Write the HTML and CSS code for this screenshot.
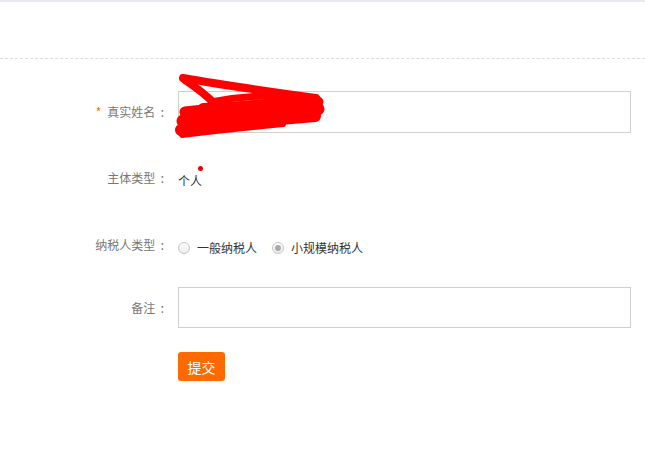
FILE: index.html
```html
<!DOCTYPE html>
<html lang="zh-CN">
<head>
<meta charset="utf-8">
<title>表单</title>
<link rel="stylesheet" href="styles.css">
</head>
<body>
<div class="topbar"></div>
<div class="header"></div>
<form class="form">
  <div class="row row-name">
    <label class="label"><span class="req">*</span>真实姓名<span class="colon">:</span></label>
    <div class="control">
      <input class="input" type="text">
      <svg class="scribble" width="160" height="70" viewBox="0 0 160 70">
        <g fill="none" stroke="#ff0000" stroke-linecap="round" stroke-linejoin="round">
          <path d="M10,6 Q55,14 143,26" stroke-width="8"/>
          <path d="M12,8 Q30,20 42,32" stroke-width="8"/>
          <path d="M38,30 Q90,20 143,26" stroke-width="7"/>
          <path d="M12,40 Q80,32 145,30" stroke-width="11"/>
          <path d="M10,49 Q80,41 145,37" stroke-width="13"/>
          <path d="M8,58 Q70,50 142,44" stroke-width="12"/>
          <path d="M30,36 L140,33" stroke-width="10"/>
          <path d="M9,63 Q50,58 110,52" stroke-width="6"/>
        </g>
      </svg>
    </div>
  </div>
  <div class="row row-type">
    <label class="label">主体类型<span class="colon">:</span></label>
    <div class="control">
      <span class="value">个人</span><span class="dot"></span>
    </div>
  </div>
  <div class="row row-tax">
    <label class="label">纳税人类型<span class="colon">:</span></label>
    <div class="control radios">
      <span class="radio-item"><span class="radio"></span>一般纳税人</span>
      <span class="radio-item"><span class="radio checked"></span>小规模纳税人</span>
    </div>
  </div>
  <div class="row row-note">
    <label class="label">备注<span class="colon">:</span></label>
    <div class="control">
      <input class="input" type="text">
    </div>
  </div>
  <div class="row row-btn">
    <span class="label"></span>
    <div class="control">
      <button class="btn" type="button">提交</button>
    </div>
  </div>
</form>
</body>
</html>
```
FILE: styles.css
```css
html, body {
  margin: 0;
  padding: 0;
  background: #fff;
}
body {
  font-family: "Microsoft YaHei", "Noto Sans CJK SC", "Noto Sans", sans-serif;
  font-size: 12px;
  color: #333;
}
.topbar {
  height: 2px;
  background: #e9e9f1;
}
.header {
  height: 56px;
  border-bottom: 1px dashed #dcdcdc;
}
.form {
  margin: 0;
  padding-top: 32px;
  width: 631px;
}
.row {
  display: flex;
  align-items: stretch;
}
.label {
  width: 170px;
  box-sizing: border-box;
  padding-right: 6px;
  text-align: right;
  color: #777;
  font-size: 12px;
  line-height: 18px;
  flex-shrink: 0;
  display: flex;
  align-items: center;
  justify-content: flex-end;
}
.colon {
  margin-left: 5px;
  font-size: 13px;
}
.req {
  color: #ff6a00;
  margin-right: 6px;
  font-size: 12px;
}
.control {
  position: relative;
  flex: 1;
  margin-left: 8px;
  display: flex;
  align-items: center;
}
.row-name { height: 42px; }
.row-type { height: 42px; margin-top: 26px; }
.row-type .label { padding-bottom: 4px; }
.row-tax { height: 42px; margin-top: 23px; }
.row-note { height: 41px; margin-top: 21px; }
.row-btn { margin-top: 24px; }
.input {
  box-sizing: border-box;
  width: 453px;
  height: 100%;
  border: 1px solid #cfcfcf;
  margin: 0;
  padding: 0 8px;
  background: #fff;
  outline: none;
}
.scribble {
  position: absolute;
  left: -5px;
  top: -19px;
}
.value {
  color: #333;
  font-size: 12px;
  line-height: 18px;
  margin-top: 2px;
}
.dot {
  position: absolute;
  left: 20px;
  top: 7px;
  width: 5px;
  height: 5px;
  border-radius: 50%;
  background: #e00;
}
.radios {
  padding-top: 6px;
}
.radio-item {
  display: inline-flex;
  align-items: center;
  color: #333;
  font-size: 12px;
  line-height: 18px;
  margin-right: 15px;
}
.radio {
  display: inline-block;
  box-sizing: border-box;
  width: 12px;
  height: 12px;
  border-radius: 50%;
  border: 1px solid #c4c4c4;
  background: linear-gradient(#ffffff, #ececec);
  margin-right: 7px;
  position: relative;
}
.radio.checked::after {
  content: "";
  position: absolute;
  left: 2px;
  top: 2px;
  width: 6px;
  height: 6px;
  border-radius: 50%;
  background: #a9a9a9;
}
.btn {
  width: 47px;
  height: 29px;
  border: none;
  border-radius: 3px;
  background: #ff6a00;
  color: #fff;
  font-family: inherit;
  font-size: 14px;
  padding: 0;
  cursor: pointer;
}
```
